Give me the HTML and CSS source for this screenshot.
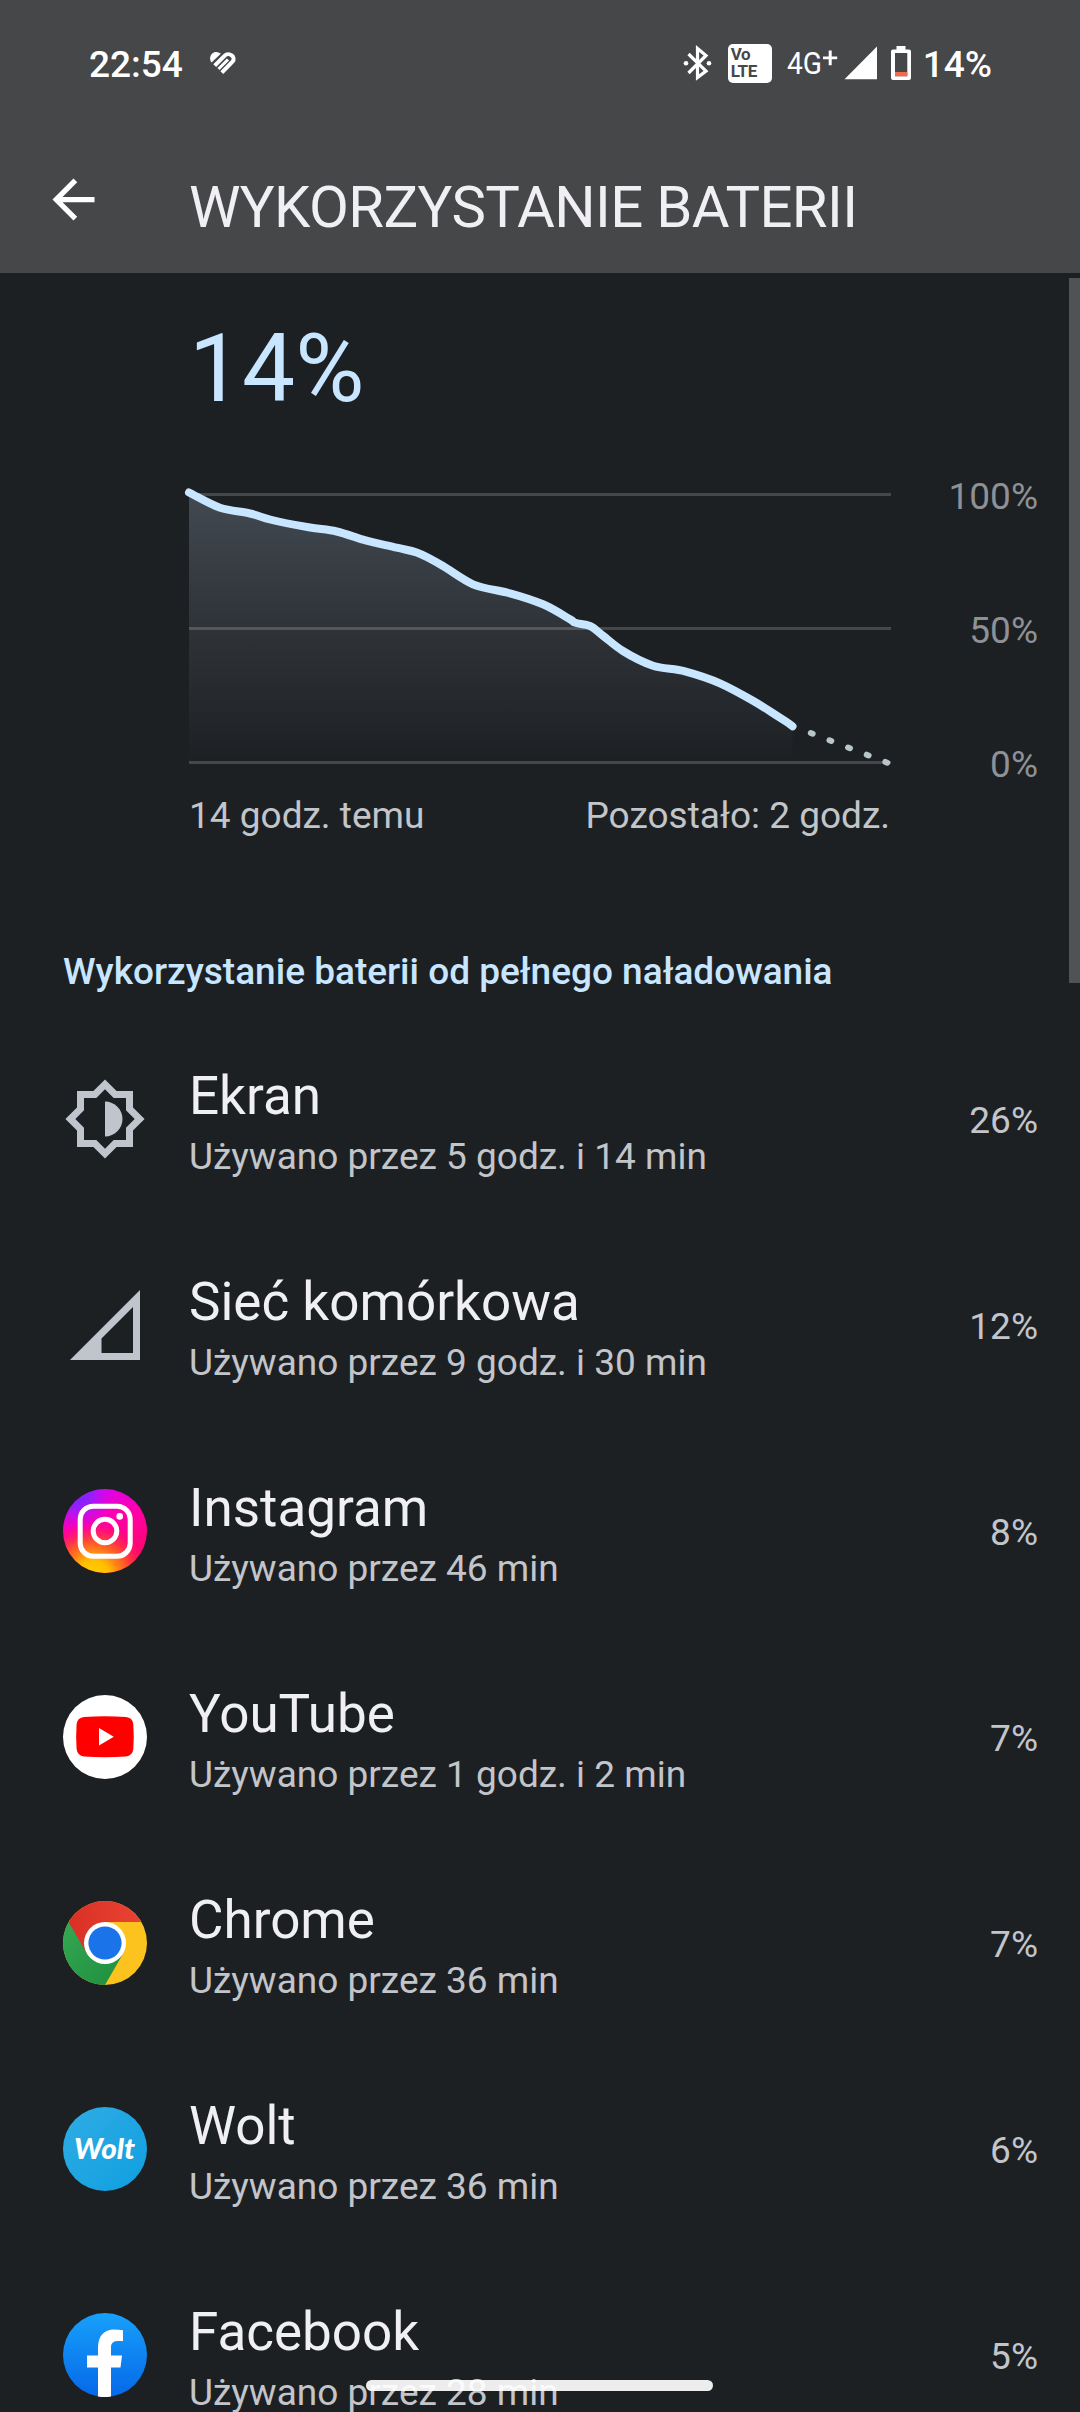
FILE: index.html
```html
<!DOCTYPE html>
<html lang="pl">
<head>
<meta charset="utf-8">
<title>Wykorzystanie baterii</title>
<link rel="stylesheet" href="styles.css">
</head>
<body>
<div class="screen">
  <header class="top">
    <div class="status">
      <span class="clock">22:54</span>
      <svg class="heart" width="28" height="24" viewBox="209 51 28 24">
        <path fill="#fff" d="M211.500 62.500C208.500 59 210.500 52.500 215.500 52C218 51.800 220 53 220.800 53.800z"/>
        <g fill="none" stroke="#fff">
          <path d="M214.700 65.700L224.500 55.800C229 51.300 236.500 57.200 232.500 61.700L221.800 72.600" stroke-width="4"/>
          <path d="M218.500 69L228 59.500" stroke-width="3"/>
        </g>
      </svg>
      <div class="status-right">
        <svg class="bt" width="30" height="36" viewBox="683 45 30 36">
          <path d="M688.500 54L706 71L697.500 77.500V48.500L706 55.500L688.500 73" fill="none" stroke="#fff" stroke-width="3.200"/>
          <circle cx="686" cy="63.300" r="2.300" fill="#fff"/><circle cx="709" cy="63.300" r="2.300" fill="#fff"/>
        </svg>
        <span class="volte"><span>Vo</span><span>LTE</span></span>
        <svg class="net" width="52" height="36" viewBox="787 45 52 36" fill="#fff">
          <text class="net-text" x="787" y="73.500" textLength="35" lengthAdjust="spacingAndGlyphs">4G</text>
          <path d="M828.700 50.500h3v6h5.500v2.800h-5.500v6h-3v-6h-5.700v-2.800h5.700z"/>
        </svg>
        <svg class="signal" width="34" height="34" viewBox="844 46 34 34"><path d="M844.500 79.200H877V46.500z" fill="#fff"/></svg>
        <svg class="battery" width="20" height="34" viewBox="891 46 20 34">
          <path fill="#fff" fill-rule="evenodd" d="M896.500 46h9v3.500h3.500a2 2 0 0 1 2 2V78a2 2 0 0 1-2 2h-16a2 2 0 0 1-2-2V51.500a2 2 0 0 1 2-2h3.500zM895 53v23.200h12.300V53z"/>
          <path fill="#ee6c4a" d="M895 72h12.300v4.200H895z"/>
        </svg>
        <span class="level">14%</span>
      </div>
    </div>
    <div class="bar">
      <svg class="back" width="63" height="63" viewBox="0 0 24 24"><path fill="#fff" d="M20 11H7.830l5.590-5.590L12 4l-8 8 8 8 1.410-1.410L7.830 13H20z"/></svg>
      <h1 class="title">WYKORZYSTANIE BATERII</h1>
    </div>
  </header>

  <main class="content">
    <div class="big">14%</div>
    <section class="chart">
      <svg class="plot" width="720" height="300" viewBox="180 480 720 300">
        <defs>
          <linearGradient id="fade" gradientUnits="userSpaceOnUse" x1="0" y1="494" x2="0" y2="763">
            <stop offset="0" stop-color="#424951"/><stop offset=".5" stop-color="#2f3338"/><stop offset="1" stop-color="#1d2023"/>
          </linearGradient>
        </defs>
        <path fill="url(#fade)" d="M189 492.500C198 497 210 504.400 220 507.700S241.700 511.500 250 513.500S262 517.400 270 519.500S300 525.800 310 527.500S327.900 529.400 336.700 531.500S354 537 363 539.700S388.200 545.600 396.700 547.700S409.700 550 416.700 552.500S434 560.700 443 566S463 579.900 473 584.300S499 590.300 510 593.300S533.500 600.300 543 604.300S565 616.300 570 619.300S572 621.400 575 622.700S585.300 624 590 626S597.700 631.700 603 635.700S615 646 623 651S643 662.300 653 665.700S674 668.300 685 671.300S709 678.400 720 683.300S743.500 695.300 753 700.700S770.100 711.400 776.700 715.700S788 722.500 792.500 726.300V763H189z"/>
        <path stroke="#fff" stroke-opacity=".18" stroke-width="3" d="M189 494.500H891M189 628.500H891M189 762.500H891"/>
        <path fill="none" stroke="#c8e6ff" stroke-width="8" stroke-linecap="round" stroke-linejoin="round" d="M189 492.500C198 497 210 504.400 220 507.700S241.700 511.500 250 513.500S262 517.400 270 519.500S300 525.800 310 527.500S327.900 529.400 336.700 531.500S354 537 363 539.700S388.200 545.600 396.700 547.700S409.700 550 416.700 552.500S434 560.700 443 566S463 579.900 473 584.300S499 590.300 510 593.300S533.500 600.300 543 604.300S565 616.300 570 619.300S572 621.400 575 622.700S585.300 624 590 626S597.700 631.700 603 635.700S615 646 623 651S643 662.300 653 665.700S674 668.300 685 671.300S709 678.400 720 683.300S743.500 695.300 753 700.700S770.100 711.400 776.700 715.700S788 722.500 792.500 726.300"/>
        <path fill="none" stroke="#b9c5c9" stroke-width="6" stroke-linecap="round" stroke-dasharray="2 18" d="M810.800 733L887.300 762.700"/>
      </svg>
      <div class="scale"><span>100%</span><span>50%</span><span>0%</span></div>
    </section>
    <div class="times"><span>14 godz. temu</span><span>Pozostało: 2 godz.</span></div>
    <h2 class="section">Wykorzystanie baterii od pełnego naładowania</h2>

    <ul class="list">
      <li class="row">
        <svg class="icon" viewBox="0 0 24 24" fill="#c0c5cd"><path fill-rule="evenodd" d="M20 15.310L23.310 12 20 8.690V4h-4.690L12 .690 8.690 4H4v4.690L.690 12 4 15.310V20h4.690L12 23.310 15.310 20H20zM18 14.480V18h-3.520L12 20.480 9.520 18H6v-3.520L3.520 12 6 9.520V6h3.520L12 3.520 14.480 6H18v3.520L20.480 12z"/><path d="M12 7v10c2.760 0 5-2.240 5-5s-2.240-5-5-5z"/></svg>
        <div class="info"><div class="name">Ekran</div><div class="sub">Używano przez 5 godz. i 14 min</div></div>
        <div class="pct">26%</div>
      </li>
      <li class="row">
        <svg class="icon" viewBox="0 0 24 24" fill="#c0c5cd"><path fill-rule="evenodd" d="M2 22h20V2zM20 6.830V20h-9v-4.170z"/></svg>
        <div class="info"><div class="name">Sieć komórkowa</div><div class="sub">Używano przez 9 godz. i 30 min</div></div>
        <div class="pct">12%</div>
      </li>
      <li class="row">
        <svg class="icon" viewBox="0 0 84 84">
          <defs>
            <linearGradient id="ig" x1=".3" y1="0" x2=".6" y2="1"><stop offset="0" stop-color="#d800f5"/><stop offset=".4" stop-color="#ff00a8"/><stop offset="1" stop-color="#ff0a5a"/></linearGradient>
            <radialGradient id="ig-warm" gradientUnits="userSpaceOnUse" cx="30" cy="88" r="56"><stop offset="0" stop-color="#ffd500"/><stop offset=".3" stop-color="#ffbe00"/><stop offset=".65" stop-color="#ff5a20" stop-opacity=".85"/><stop offset="1" stop-color="#ff1060" stop-opacity="0"/></radialGradient>
            <radialGradient id="ig-cool" gradientUnits="userSpaceOnUse" cx="14" cy="4" r="40"><stop offset="0" stop-color="#6a28ff"/><stop offset=".4" stop-color="#9420ff" stop-opacity=".9"/><stop offset="1" stop-color="#e800e8" stop-opacity="0"/></radialGradient>
          </defs>
          <circle cx="42" cy="42" r="42" fill="url(#ig)"/><circle cx="42" cy="42" r="42" fill="url(#ig-warm)"/><circle cx="42" cy="42" r="42" fill="url(#ig-cool)"/>
          <rect x="17.200" y="17.200" width="50" height="50" rx="13" fill="none" stroke="#fff" stroke-width="5"/>
          <circle cx="42" cy="42" r="11.800" fill="none" stroke="#fff" stroke-width="5"/><circle cx="56.700" cy="27.400" r="3.300" fill="#fff"/>
        </svg>
        <div class="info"><div class="name">Instagram</div><div class="sub">Używano przez 46 min</div></div>
        <div class="pct">8%</div>
      </li>
      <li class="row">
        <svg class="icon" viewBox="0 0 84 84"><circle cx="42" cy="42" r="42" fill="#fff"/><path fill="#f00" d="M21 22Q42 20.600 63 22Q69.500 22.500 70.300 29Q71.200 41.500 70.300 54Q69.500 60.800 63 61.500Q42 63 21 61.500Q14.500 60.800 13.600 54Q12.700 41.500 13.600 29Q14.500 22.500 21 22z"/><path fill="#fff" d="M36 33v17.500l14.800-8.700z"/></svg>
        <div class="info"><div class="name">YouTube</div><div class="sub">Używano przez 1 godz. i 2 min</div></div>
        <div class="pct">7%</div>
      </li>
      <li class="row">
        <svg class="icon" viewBox="0 0 84 84">
          <defs>
            <linearGradient id="cr" x1="0" x2="1"><stop offset="0" stop-color="#d93025"/><stop offset="1" stop-color="#ea4335"/></linearGradient>
            <linearGradient id="cg" x1="0" y1="0" x2="1" y2="1"><stop offset="0" stop-color="#34a853"/><stop offset="1" stop-color="#1e8e3e"/></linearGradient>
          </defs>
          <circle cx="42" cy="42" r="42" fill="#fcc31e"/>
          <path fill="url(#cg)" d="M5.630 21A42 42 0 0 0 42 84L60.190 52.500L42 42z"/>
          <path fill="url(#cr)" d="M78.370 21A42 42 0 0 0 5.630 21L23.810 52.500L42 42V21z"/>
          <circle cx="42" cy="42" r="21" fill="#fff"/><circle cx="42" cy="42" r="16.600" fill="#1a73e8"/>
        </svg>
        <div class="info"><div class="name">Chrome</div><div class="sub">Używano przez 36 min</div></div>
        <div class="pct">7%</div>
      </li>
      <li class="row">
        <svg class="icon" viewBox="0 0 84 84"><defs><linearGradient id="wo" x1="0" y1="0" x2="1" y2="1"><stop offset="0" stop-color="#30ace4"/><stop offset="1" stop-color="#0f9fe0"/></linearGradient></defs><circle cx="42" cy="42" r="42" fill="url(#wo)"/><text class="wolt" x="11" y="52" textLength="61" lengthAdjust="spacingAndGlyphs">Wolt</text></svg>
        <div class="info"><div class="name">Wolt</div><div class="sub">Używano przez 36 min</div></div>
        <div class="pct">6%</div>
      </li>
      <li class="row">
        <svg class="icon" viewBox="0 0 84 84"><defs><linearGradient id="fb" x1="0" y1="0" x2="0" y2="1"><stop offset="0" stop-color="#18a0fb"/><stop offset="1" stop-color="#0568e8"/></linearGradient></defs><circle cx="42" cy="42" r="42" fill="url(#fb)"/><path fill="#fff" d="M35 83.500V54.500H24V42.500H35V35C35 23 41 16.500 51 16.500Q56 16.500 60 17.300V28H54.500C49.500 28 48 31 48 34.500V42.500H59L57.500 54.500H48V83.500Q41.500 84.500 35 83.500z"/></svg>
        <div class="info"><div class="name">Facebook</div><div class="sub">Używano przez 28 min</div></div>
        <div class="pct">5%</div>
      </li>
    </ul>
  </main>
  <div class="scrollbar"></div>
  <div class="home"></div>
</div>
</body>
</html>
```
FILE: styles.css
```css
* { box-sizing: border-box; margin: 0; padding: 0; }
body { background: #1d2023; font-family: Roboto, "Noto Sans", sans-serif; color: #f0f0f4; }
svg { display: block; flex: none; }
.screen { position: relative; width: 1080px; height: 2412px; overflow: hidden; background: #1d2023; }

.top { height: 273px; background: #464749; }
.status { display: flex; align-items: flex-start; height: 168px; padding: 42px 88px 0 89px; color: #fff; }
.clock, .level { margin-top: 1px; font-size: 37px; font-weight: 500; line-height: 44px; }
.heart { margin: 9px 0 0 26px; }
.status-right { display: flex; margin-left: auto; }
.bt { margin-top: 3px; }
.volte { display: flex; flex-direction: column; width: 44px; height: 39px; margin: 2px 0 0 15px; padding: 2px 0 0 3px; border-radius: 5px; background: #fff; color: #464749; font-size: 17px; font-weight: 700; line-height: 17px; letter-spacing: -.4px; }
.net { margin: 3px 0 0 15px; }
.net-text { font-size: 32px; }
.signal { margin: 4px 0 0 5px; }
.battery { margin: 4px 0 0 13px; }
.level { margin-left: 12px; }
.bar { display: flex; align-items: flex-start; padding-left: 42px; }
.title { margin: 5px 0 0 84px; font-size: 58px; font-weight: 400; line-height: 68px; letter-spacing: -.6px; white-space: nowrap; }

.big { height: 207px; padding: 41px 0 0 189px; font-size: 94.5px; line-height: 110px; color: #c8e6ff; }
.chart { display: flex; height: 300px; padding: 0 42px 0 180px; }
.scale { flex: 1; padding-top: 1px; text-align: right; color: #8e9195; font-size: 37px; }
.scale span { display: block; height: 134px; line-height: 32px; }
.times { display: flex; justify-content: space-between; padding: 14px 190px 0 189px; font-size: 37px; line-height: 44px; color: #c2c5ca; }
.section { height: 178px; padding: 112px 0 0 63px; font-size: 37px; font-weight: 500; line-height: 44px; color: #c8e6ff; }

.list { list-style: none; }
.row { display: flex; height: 206px; padding: 0 42px 0 63px; }
.icon { width: 84px; height: 84px; margin-top: 61px; }
.info { flex: 1; padding: 49px 0 0 42px; white-space: nowrap; }
.name { font-size: 53px; line-height: 62px; }
.sub { margin-top: 8px; font-size: 37px; line-height: 44px; color: #c2c5ca; }
.pct { padding-top: 83px; font-size: 37px; line-height: 44px; color: #c2c5ca; }
.wolt { font: italic 900 29px Lato, sans-serif; fill: #fff; }

.scrollbar { position: absolute; top: 278px; right: 0; width: 11px; height: 705px; background: #505356; }
.home { position: absolute; left: 366px; top: 2380px; width: 347px; height: 11px; border-radius: 6px; background: rgba(255, 255, 255, .92); }
```
